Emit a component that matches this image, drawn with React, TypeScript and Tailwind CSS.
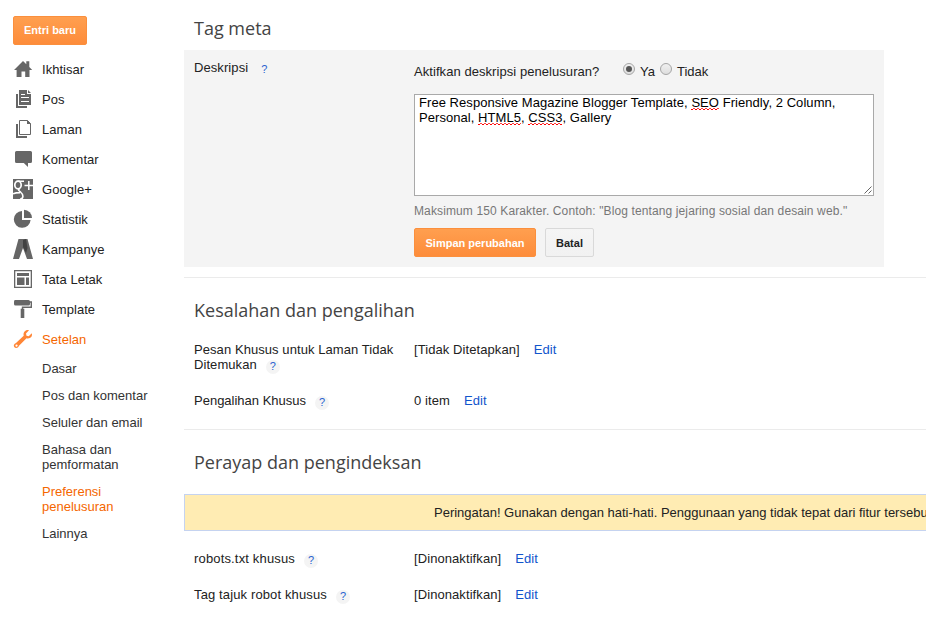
import type { ReactNode } from "react";

const G = "#666666";

function Icon({ children }: { children: ReactNode }) {
  return (
    <svg width="20" height="20" viewBox="0 0 20 20" className="block shrink-0" fill={G}>
      {children}
    </svg>
  );
}

const nav: { label: string; icon: ReactNode; active?: boolean }[] = [
  {
    label: "Ikhtisar",
    icon: (
      <Icon>
        <path d="M10 2L13.3 5.3V2.2H16.3V8L19.2 11H16.5V18H12.2V12.5H8.5V18H3.6V11H1Z" />
      </Icon>
    ),
  },
  {
    label: "Pos",
    icon: (
      <Icon>
        <path d="M3 5H5V17H14V19H3Z" />
        <path d="M6 1H14V5H18V16H6ZM15 1L18 4H15Z" />
        <path d="M8 5H12V6H8ZM8 8H16V9H8ZM8 12H16V13H8Z" fill="#fff" />
      </Icon>
    ),
  },
  {
    label: "Laman",
    icon: (
      <Icon>
        <path d="M3 5H5V17H14V19H3Z" />
        <path d="M6.5 1.5H14.5L17.5 4.5V15.5H6.5Z" fill="#fff" stroke={G} />
        <path d="M14 1L18 5H14Z" />
      </Icon>
    ),
  },
  {
    label: "Komentar",
    icon: (
      <Icon>
        <path d="M3.5 2H17.5Q19 2 19 3.5V12.5Q19 14 17.5 14H15V18L10.8 14H3.5Q2 14 2 12.5V3.5Q2 2 3.5 2Z" />
      </Icon>
    ),
  },
  {
    label: "Google+",
    icon: (
      <Icon>
        <rect width="20" height="20" />
        <g fill="none" stroke="#fff">
          <ellipse cx="5" cy="6" rx="3.2" ry="3.8" strokeWidth="1.7" />
          <path d="M4.5 2.2H11M6.5 10C5 11 5.4 11.5 7.5 13C11 16 10.5 20 7 20.2M0 14.8C2 13.8 4 13.6 7 13.6" strokeWidth="1.6" />
          <path d="M11.5 6.5H20M15.8 2V11" strokeWidth="1.5" />
        </g>
      </Icon>
    ),
  },
  {
    label: "Statistik",
    icon: (
      <Icon>
        <path d="M9 2V11H17.6A8.4 8.4 0 1 1 9 2Z" />
        <path d="M11 0.8A8.2 8.2 0 0 1 19 9H11Z" />
      </Icon>
    ),
  },
  {
    label: "Kampanye",
    icon: (
      <Icon>
        <path d="M5.5 0H14.5L20 20H14L10 9L6 20H0Z" />
        <path d="M10 1L13 0L14.5 9L13 14L10 8Z" fill="#414141" />
      </Icon>
    ),
  },
  {
    label: "Tata Letak",
    icon: (
      <Icon>
        <path d="M1 1H19V19H1ZM2.3 2.3V17.7H17.7V2.3Z" fillRule="evenodd" />
        <path d="M4 4H16V7H4ZM4 8.5H11.5V16H4ZM13 8.5H16V16H13Z" />
      </Icon>
    ),
  },
  {
    label: "Template",
    icon: (
      <Icon>
        <path d="M2 1H15.5Q17 1 17 2.5V5Q17 6.5 15.5 6.5H2.5Q1 6.5 1 5V2.5Q1 1 2 1Z" />
        <path d="M16 3H18.3V8.3H9.5V10" fill="none" stroke={G} strokeWidth="1.4" />
        <rect x="7.7" y="9.7" width="3.6" height="9.3" />
      </Icon>
    ),
  },
  {
    label: "Setelan",
    active: true,
    icon: (
      <Icon>
        <path
          d="M16 1.2L13 4.5L13.5 6.7L15.7 7.2L18.8 4.2C19.8 7.5 17 10.2 13.5 9.2L6 16.8C5.2 19.2 2.5 19.8 1.2 18C0.3 16.5 1 14.5 3 14L10.7 6.7C9.8 3.2 12.5 0.5 16 1.2ZM3.5 15.5A1.1 1.1 0 1 0 3.6 17.7A1.1 1.1 0 0 0 3.5 15.5Z"
          fill="#ff8637"
          fillRule="evenodd"
        />
      </Icon>
    ),
  },
];

const subNav: { label: string; active?: boolean }[] = [
  { label: "Dasar" },
  { label: "Pos dan komentar" },
  { label: "Seluler dan email" },
  { label: "Bahasa dan pemformatan" },
  { label: "Preferensi penelusuran", active: true },
  { label: "Lainnya" },
];

function Misspelled({ children, id }: { children: string; id: string }) {
  return (
    <span className="relative inline-block">
      {children}
      <svg className="absolute left-0 top-[13px] h-[2px] w-full" shapeRendering="crispEdges">
        <defs>
          <pattern id={id} width="4" height="2" patternUnits="userSpaceOnUse">
            <rect x="0" y="1" width="2" height="1" fill="#ff0000" />
            <rect x="2" y="0" width="2" height="1" fill="#ff0000" opacity="0.75" />
          </pattern>
        </defs>
        <rect width="100%" height="2" fill={`url(#${id})`} />
      </svg>
    </span>
  );
}

function Help() {
  return (
    <span className="-my-1 ml-[9px] inline-flex h-[14px] w-[14px] items-center justify-center rounded-full bg-[#f4f4f4] align-[-1px] text-[11px] leading-[12px] tracking-normal text-[#2a62d0]">
      <span className="-mt-px">?</span>
    </span>
  );
}

function Heading({ children }: { children: string }) {
  return (
    <h2 className="pl-[10px] font-['Open_Sans',sans-serif] text-[18px] leading-6 font-normal text-[#444]">
      {children}
    </h2>
  );
}

function Row({
  label,
  value,
  className = "",
  labelClass = "",
}: {
  label: string;
  value: string;
  className?: string;
  labelClass?: string;
}) {
  return (
    <div className={`flex pl-[10px] leading-[15px] ${className}`}>
      <div className={`w-[220px] shrink-0 pr-4 ${labelClass}`}>
        {label}
        <Help />
      </div>
      <span className="tracking-[0.08px]">{value}</span>
      <a className="ml-[14px] tracking-[0.1px] text-[#1155cc]">Edit</a>
    </div>
  );
}

function Radio({ checked }: { checked?: boolean }) {
  return (
    <span className="-mt-px flex h-3 w-3 items-center justify-center rounded-full border border-[#a5a5a5] bg-linear-to-b from-[#f0f0f0] to-[#dedede]">
      {checked && <span className="h-[6px] w-[6px] rounded-full bg-[#555]" />}
    </span>
  );
}

export default function App() {
  return (
    <div className="flex h-[619px] w-[926px] overflow-hidden bg-white font-['Liberation_Sans',Arial,sans-serif] text-[13px] text-[#222]">
      <aside className="w-[184px] shrink-0 pt-4">
        <button className="ml-[13px] block h-[29px] w-[74px] rounded-[2px] border border-[#fb8f3d] bg-linear-to-b from-[#ff9f4f] to-[#fd8c3a] text-[11px] font-bold text-white">
          Entri baru
        </button>
        <nav className="pt-[9px]">
          {nav.map((n) => (
            <a
              key={n.label}
              className={`flex h-[30px] items-center gap-[9px] pl-[13px] ${n.active ? "text-[#f56600]" : ""}`}
            >
              {n.icon}
              <span className="pt-[2px] leading-[18px] tracking-[0.04px]">{n.label}</span>
            </a>
          ))}
        </nav>
        <div className="flex w-[160px] flex-col gap-3 pt-[7px] pl-[42px] leading-[15px]">
          {subNav.map((s) => (
            <a key={s.label} className={s.active ? "text-[#f56600]" : "text-[#333]"}>
              {s.label}
            </a>
          ))}
        </div>
      </aside>

      <main className="min-w-0 flex-1">
        <section className="h-[278px] border-b border-[#ebebeb] pt-4">
          <Heading>Tag meta</Heading>
          <div className="mt-[10px] flex h-[217px] w-[700px] bg-[#f4f4f4] pl-[10px]">
            <div className="w-[220px] shrink-0 pt-[10px] leading-[15px] tracking-[0.08px]">
              Deskripsi
              <Help />
            </div>
            <div className="w-[460px]">
              <div className="flex pt-[14px] leading-[15px]">
                <span className="w-[209px] tracking-[0.06px]">Aktifkan deskripsi penelusuran?</span>
                <Radio checked />
                <span className="ml-[5px] w-[20px]">Ya</span>
                <Radio />
                <span className="ml-[5px]">Tidak</span>
              </div>
              <div className="relative mt-[15px] h-[102px] border border-[#a9a9a9] bg-white px-1 leading-[15px] tracking-[0.055px] whitespace-nowrap text-black">
                Free Responsive Magazine Blogger Template, <Misspelled id="w1">SEO</Misspelled> Friendly, 2 Column,
                <br />
                Personal, <Misspelled id="w2">HTML5</Misspelled>, <Misspelled id="w3">CSS3</Misspelled>, Gallery
                <svg className="absolute right-px bottom-px" width="8" height="8" viewBox="0 0 8 8" stroke="#666" fill="none">
                  <path d="M0.5 7.5L7.5 0.5M4.5 7.5L7.5 4.5" />
                </svg>
              </div>
              <p className="mt-2 text-[12px] leading-[15px] tracking-[0.12px] whitespace-nowrap text-[#777]">
                Maksimum 150 Karakter. Contoh: "Blog tentang jejaring sosial dan desain web."
              </p>
              <div className="mt-[9px] flex gap-[9px] text-[11px] font-bold">
                <button className="h-[29px] w-[122px] rounded-[2px] border border-[#fb8f3d] bg-linear-to-b from-[#ff9f4f] to-[#fd8c3a] pt-[2px] text-white">
                  Simpan perubahan
                </button>
                <button className="h-[29px] w-[49px] rounded-[2px] border border-[#d9d9d9] bg-linear-to-b from-[#f5f5f5] to-[#f1f1f1] pt-[2px] text-[#222]">
                  Batal
                </button>
              </div>
            </div>
          </div>
        </section>

        <section className="h-[152px] border-b border-[#ebebeb] pt-5">
          <Heading>Kesalahan dan pengalihan</Heading>
          <Row
            className="mt-5"
            labelClass="tracking-[0.07px]"
            label="Pesan Khusus untuk Laman Tidak Ditemukan"
            value="[Tidak Ditetapkan]"
          />
          <Row className="mt-[21px]" label="Pengalihan Khusus" value="0 item" />
        </section>

        <section className="pt-5">
          <Heading>Perayap dan pengindeksan</Heading>
          <div className="mt-5 h-[37px] w-[1000px] border border-[#c5d3f0] bg-[#ffecb3] pl-[249px] leading-[35px] whitespace-nowrap">
            Peringatan! Gunakan dengan hati-hati. Penggunaan yang tidak tepat dari fitur tersebut
          </div>
          <Row className="mt-5" labelClass="tracking-[0.16px]" label="robots.txt khusus" value="[Dinonaktifkan]" />
          <Row
            className="mt-[21px]"
            labelClass="tracking-[0.13px]"
            label="Tag tajuk robot khusus"
            value="[Dinonaktifkan]"
          />
        </section>
      </main>
    </div>
  );
}
